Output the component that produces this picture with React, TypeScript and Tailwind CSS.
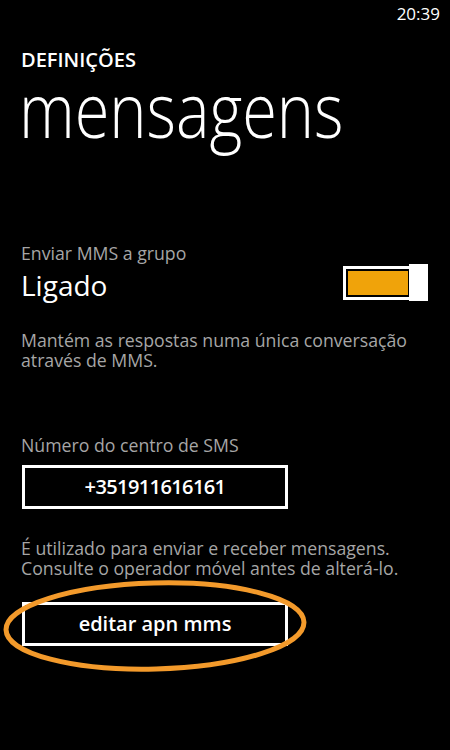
import React from "react";

export default function App() {
  const font = { fontFamily: '"Open Sans", "Noto Sans", sans-serif' };
  return (
    <div className="relative w-[450px] h-[750px] bg-black text-white overflow-hidden" style={font}>
      <div className="flex justify-end h-[30px] pr-[10px] pt-[3px] text-[17px] leading-[22px]">20:39</div>
      <div className="pl-[21px]">
        <div className="mt-[18px] text-[20px] leading-[24px] font-semibold">DEFINIÇÕES</div>
        <div className="-mt-[5px] text-[76px] leading-[84px] font-light -ml-[2px] scale-x-[0.83] origin-left whitespace-nowrap">mensagens</div>

        <div className="mt-[91px] text-[17.7px] leading-[22px] text-[#a6a6a6]">Enviar MMS a grupo</div>
        <div className="flex items-center justify-between pr-[22px]">
          <div className="text-[28px] leading-[38px]">Ligado</div>
          <div className="flex items-center mb-[4px]">
            <div className="w-[66px] h-[34px] border-[3px] border-white border-r-0 p-[2px] pr-[1px] flex">
              <div className="flex-1 bg-[#f0a30a]"></div>
            </div>
            <div className="w-[19px] h-[37px] bg-white"></div>
          </div>
        </div>
        <div className="mt-[25px] text-[17.7px] leading-[20px] text-[#a6a6a6]">
          Mantém as respostas numa única conversação<br />através de MMS.
        </div>

        <div className="mt-[64px] text-[17.7px] leading-[22px] text-[#a6a6a6]">Número do centro de SMS</div>
        <div className="mt-[9px] ml-[1px] w-[266px] h-[44px] border-[3px] border-white flex items-center justify-center text-[20px] font-semibold tracking-[-0.6px]">
          +351911616161
        </div>
        <div className="mt-[29px] text-[17.7px] leading-[20px] text-[#a6a6a6]">
          É utilizado para enviar e receber mensagens.<br />Consulte o operador móvel antes de alterá-lo.
        </div>
        <div className="mt-[24px] ml-[1px] w-[266px] h-[44px] border-[3px] border-white flex items-center justify-center text-[20px] font-semibold">
          editar apn mms
        </div>
      </div>
      <svg className="absolute left-0 top-0 pointer-events-none" width="450" height="750">
        <ellipse cx="155" cy="626" rx="149" ry="43" fill="none" stroke="#f39a2b" strokeWidth="5" transform="rotate(-1.5 155 626)" />
      </svg>
    </div>
  );
}
